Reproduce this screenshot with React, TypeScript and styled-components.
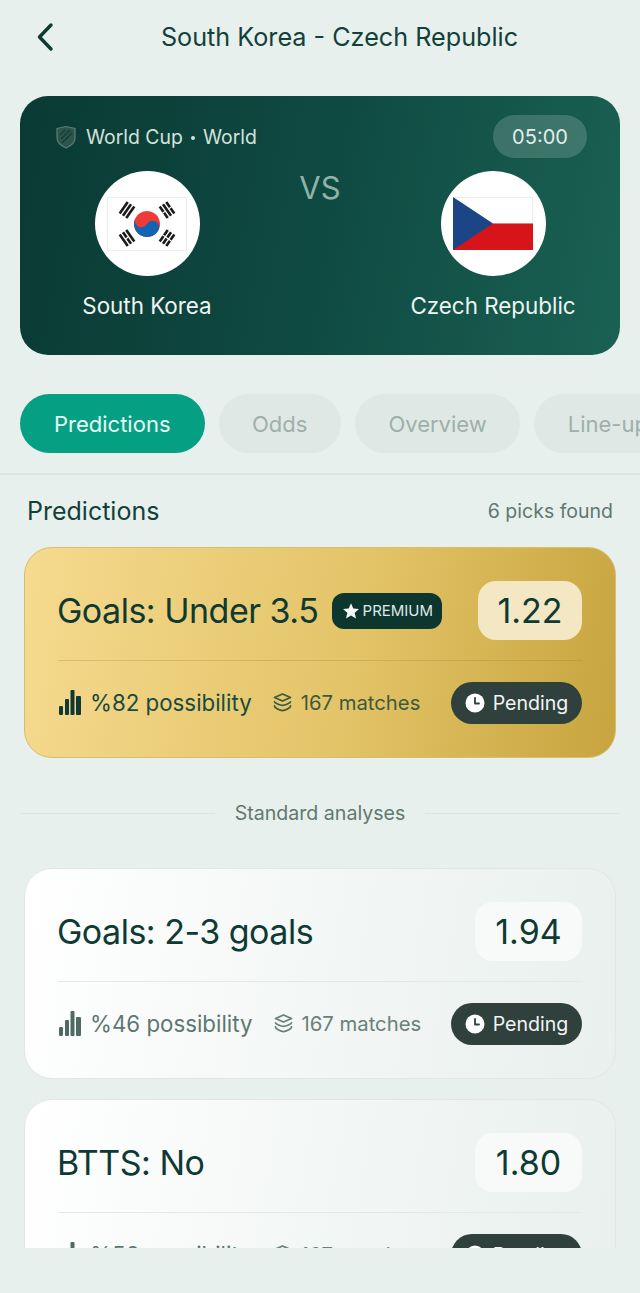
import React from 'react';
import styled, { createGlobalStyle } from 'styled-components';

const GlobalStyle = createGlobalStyle`
  html, body {
    margin: 0;
    padding: 0;
    background: #e8f0ed;
  }
  body {
    font-family: Inter, "Noto Sans", sans-serif;
    color: #0f3a33;
  }
  * {
    box-sizing: border-box;
  }
`;

const Page = styled.div`
  width: 640px;
  height: 1293px;
  display: flex;
  flex-direction: column;
  overflow: hidden;
  background: #e8f0ed;
`;

const Header = styled.header`
  height: 74px;
  flex: none;
  padding: 0 0 1px 39px;
  display: flex;
  align-items: center;
  justify-content: center;
  position: relative;
`;

const BackButton = styled.div`
  position: absolute;
  left: 30px;
  top: 19px;
  width: 32px;
  height: 36px;
  color: #0f3a33;
`;

const HeaderTitle = styled.h1`
  margin: 0;
  font-size: 25.2px;
  font-weight: 400;
  color: #12413a;
`;

const Hero = styled.section`
  flex: none;
  margin: 22px 20px 0;
  height: 259px;
  padding: 19px 33px;
  border-radius: 28px;
  background: linear-gradient(100deg, #0a3a34 0%, #0f4a42 50%, #1a6153 100%);
  color: #fff;
`;

const HeroTop = styled.div`
  height: 43px;
  display: flex;
  align-items: center;
  justify-content: space-between;
`;

const League = styled.div`
  margin-left: 2px;
  display: flex;
  align-items: center;
  gap: 9px;
  font-size: 19.4px;
  color: #d3e2dd;
`;

const Dot = styled.span`
  margin: 0 8px;
  display: inline-block;
  width: 4px;
  height: 4px;
  border-radius: 50%;
  vertical-align: middle;
  background: #d3e2dd;
`;

const TimePill = styled.div`
  width: 94px;
  height: 43px;
  border-radius: 22px;
  display: flex;
  align-items: center;
  justify-content: center;
  background: rgba(255, 255, 255, 0.17);
  font-size: 20px;
  color: #e3eeea;
`;

const Teams = styled.div`
  margin-top: 13px;
  display: flex;
  justify-content: space-between;
`;

const Team = styled.div`
  width: 188px;
  display: flex;
  flex-direction: column;
  align-items: center;
`;

const Crest = styled.div`
  width: 105px;
  height: 105px;
  border-radius: 50%;
  background: #fff;
  display: flex;
  align-items: center;
  justify-content: center;
`;

const TeamName = styled.div`
  margin-top: 16px;
  font-size: 22.4px;
  line-height: 28px;
  white-space: nowrap;
  color: #eef5f2;
`;

const Versus = styled.div`
  margin-top: -1px;
  font-size: 31px;
  line-height: 36px;
  color: #8fb3a9;
`;

const Tabs = styled.nav`
  flex: none;
  margin-top: 39px;
  height: 81px;
  padding-left: 20px;
  display: flex;
  gap: 14px;
  overflow: hidden;
  border-bottom: 2px solid #dde5e2;
`;

const Tab = styled.div<{ $active?: boolean }>`
  flex: none;
  height: 59px;
  padding: 0 ${(p) => (p.$active ? '34px' : '33.5px')};
  border-radius: 30px;
  display: flex;
  align-items: center;
  font-size: 22px;
  background: ${(p) => (p.$active ? '#05a084' : '#e0e8e5')};
  color: ${(p) => (p.$active ? '#e9f8f4' : '#9db0aa')};
`;

const Content = styled.main`
  flex: 1;
  min-height: 0;
  margin-bottom: 45px;
  overflow: hidden;
`;

const SectionHead = styled.div`
  height: 72px;
  padding: 0 27px 0 27px;
  display: flex;
  align-items: center;
  justify-content: space-between;
`;

const SectionTitle = styled.h2`
  margin: 0;
  font-size: 25px;
  font-weight: 400;
  color: #12413a;
`;

const PicksFound = styled.span`
  font-size: 19.5px;
  color: #5f7770;
`;

const Card = styled.article<{ $premium?: boolean }>`
  margin: 0 24px;
  height: 211px;
  padding: 33px 33px 0;
  border-radius: 28px;
  border: 1px solid ${(p) => (p.$premium ? '#d7bd6d' : '#e0e8e5')};
  background: ${(p) =>
    p.$premium
      ? 'linear-gradient(100deg, #f6da8f 0%, #e3c468 55%, #c7a43e 100%)'
      : 'linear-gradient(100deg, #ffffff 0%, #f3f7f6 50%, #e9f0ee 100%)'};

  & + & {
    margin-top: 20px;
  }
`;

const PickRow = styled.div`
  height: 59px;
  display: flex;
  align-items: center;
`;

const PickName = styled.div`
  margin-left: -1px;
  font-size: 34px;
  letter-spacing: -0.5px;
  color: #0f3a33;
  white-space: nowrap;
`;

const PremiumBadge = styled.div`
  margin-left: 14px;
  width: 110px;
  height: 36px;
  border-radius: 12px;
  background: #0d362f;
  color: #dfeae6;
  display: flex;
  align-items: center;
  justify-content: center;
  gap: 3px;
  font-size: 15px;
  white-space: nowrap;
`;

const Odds = styled.div<{ $premium?: boolean }>`
  margin-left: auto;
  width: ${(p) => (p.$premium ? '104px' : '107px')};
  height: 59px;
  border-radius: 18px;
  display: flex;
  align-items: center;
  justify-content: center;
  font-size: 34px;
  color: #0f3a33;
  background: ${(p) => (p.$premium ? '#f3e7c4' : '#f8fafa')};
`;

const Rule = styled.div<{ $premium?: boolean }>`
  margin-top: 20px;
  height: 1px;
  background: ${(p) => (p.$premium ? 'rgba(160, 130, 50, 0.3)' : '#e2e9e6')};
`;

const MetaRow = styled.div`
  margin-top: 21px;
  height: 42px;
  display: flex;
  align-items: center;
`;

const Possibility = styled.div<{ $premium?: boolean }>`
  padding-bottom: 2px;
  display: flex;
  align-items: center;
  gap: 7px;
  font-size: 22.3px;
  white-space: nowrap;
  color: ${(p) => (p.$premium ? '#1a4a3d' : '#5e7670')};

  svg {
    color: ${(p) => (p.$premium ? '#0f3a33' : '#4f6a63')};
  }
`;

const Matches = styled.div<{ $premium?: boolean }>`
  margin-left: 20px;
  padding-bottom: 2px;
  display: flex;
  align-items: center;
  gap: 8px;
  font-size: 20.3px;
  white-space: nowrap;
  color: ${(p) => (p.$premium ? '#3d5a3c' : '#6a807a')};
`;

const StatusPill = styled.div`
  margin-left: auto;
  width: 131px;
  height: 42px;
  border-radius: 21px;
  background: #2f403d;
  color: #f1f5f4;
  display: flex;
  align-items: center;
  justify-content: center;
  gap: 8px;
  font-size: 19.6px;
`;

const Separator = styled.div`
  margin: 0 20px;
  height: 110px;
  display: flex;
  align-items: center;
  gap: 20px;
  font-size: 19.6px;
  color: #62786f;

  &::before,
  &::after {
    content: '';
    flex: 1;
    height: 1px;
    background: #dbe4e1;
  }
`;

const ChevronIcon = () => (
  <svg width="32" height="36" viewBox="0 0 32 36" fill="none">
    <path d="M21 6 L9.5 18 L21 30" stroke="currentColor" strokeWidth="3.4" strokeLinecap="round" strokeLinejoin="round" />
  </svg>
);

const ShieldIcon = () => (
  <svg width="22" height="24" viewBox="0 0 22 24" fill="none">
    <path d="M2 3.5 L11 1.5 L20 3.5 V13 C20 18 15.5 21 11 23 C6.5 21 2 18 2 13 Z" fill="#2f544c" stroke="#5b7d75" strokeWidth="1.2" />
    <path d="M6 14 L15 5 M7 18 L17 8 M5 10 L10 5" stroke="#123f38" strokeWidth="1.6" />
  </svg>
);

const Trigram = ({ x, y, angle, breaks }: { x: number; y: number; angle: number; breaks: number[] }) => (
  <g transform={`translate(${x} ${y}) rotate(${angle})`}>
    {[-4, 0, 4].map((o, i) => (
      <React.Fragment key={o}>
        <rect x="-7" y={o - 1.3} width="14" height="2.6" fill="#1b1b1b" />
        {breaks[i] ? <rect x="-0.6" y={o - 1.6} width="1.2" height="3.2" fill="#fff" /> : null}
      </React.Fragment>
    ))}
  </g>
);

const KoreaFlag = () => (
  <svg width="80" height="54" viewBox="-40 -27 80 54">
    <rect x="-39.5" y="-26.5" width="79" height="53" fill="#fff" stroke="#ececec" strokeWidth="1" />
    <g transform="rotate(30)">
      <circle r="13" fill="#ef3b36" />
      <path d="M-13 0 A6.5 6.5 0 0 0 0 0 A6.5 6.5 0 0 1 13 0 A13 13 0 0 1 -13 0 Z" fill="#0f64b4" />
    </g>
    <Trigram x={-20} y={-14} angle={-55} breaks={[0, 0, 0]} />
    <Trigram x={20} y={-14} angle={55} breaks={[1, 0, 1]} />
    <Trigram x={-20} y={14} angle={55} breaks={[0, 1, 0]} />
    <Trigram x={20} y={14} angle={-55} breaks={[1, 1, 1]} />
  </svg>
);

const CzechFlag = () => (
  <svg width="80" height="53" viewBox="0 0 80 53">
    <rect x="0.5" y="0.5" width="79" height="26" fill="#fff" stroke="#ececec" strokeWidth="1" />
    <rect y="26.5" width="80" height="26.5" fill="#d7141a" />
    <path d="M0 0 L40 26.5 L0 53 Z" fill="#1c4587" />
  </svg>
);

const BarsIcon = () => (
  <svg width="25" height="26" viewBox="0 0 25 26" fill="currentColor">
    <rect x="1" y="17" width="4" height="9" rx="1.2" />
    <rect x="7" y="10" width="4" height="16" rx="1" />
    <rect x="12.5" y="1" width="4" height="25" rx="1" />
    <rect x="18" y="7" width="5" height="19" rx="1" />
  </svg>
);

const LayersIcon = () => (
  <svg width="21" height="21" viewBox="0 0 21 21" fill="none" stroke="currentColor" strokeWidth="1.8" strokeLinejoin="round" strokeLinecap="round">
    <path d="M10.5 2 L18.5 5.5 L10.5 9 L2.5 5.5 Z" />
    <path d="M2.5 9.8 C2.5 11 8 13.4 10.5 13.4 C13 13.4 18.5 11 18.5 9.8" />
    <path d="M2.5 14 C2.5 16 8 18.6 10.5 18.6 C13 18.6 18.5 16 18.5 14" />
  </svg>
);

const StarIcon = () => (
  <svg width="18" height="18" viewBox="0 0 18 18" fill="#f4f7f6">
    <path d="M9 1.2 L11.3 6.4 L17 7 L12.7 10.8 L14 16.4 L9 13.5 L4 16.4 L5.3 10.8 L1 7 L6.7 6.4 Z" />
  </svg>
);

const ClockIcon = () => (
  <svg width="20" height="20" viewBox="0 0 20 20" fill="none">
    <circle cx="10" cy="10" r="9.5" fill="#fff" />
    <path d="M10 5 V10.5 H14" stroke="#2f403d" strokeWidth="1.8" strokeLinecap="round" strokeLinejoin="round" />
  </svg>
);

type Pick = {
  name: string;
  odds: string;
  chance: number;
  premium?: boolean;
};

const standardPicks: Pick[] = [
  { name: 'Goals: 2-3 goals', odds: '1.94', chance: 46 },
  { name: 'BTTS: No', odds: '1.80', chance: 56 },
];

const PickCard = ({ pick }: { pick: Pick }) => (
  <Card $premium={pick.premium}>
    <PickRow>
      <PickName>{pick.name}</PickName>
      {pick.premium && (
        <PremiumBadge>
          <StarIcon />
          PREMIUM
        </PremiumBadge>
      )}
      <Odds $premium={pick.premium}>{pick.odds}</Odds>
    </PickRow>
    <Rule $premium={pick.premium} />
    <MetaRow>
      <Possibility $premium={pick.premium}>
        <BarsIcon />%{pick.chance} possibility
      </Possibility>
      <Matches $premium={pick.premium}>
        <LayersIcon />
        167 matches
      </Matches>
      <StatusPill>
        <ClockIcon />
        Pending
      </StatusPill>
    </MetaRow>
  </Card>
);

export default function App() {
  return (
    <Page>
      <GlobalStyle />
      <Header>
        <BackButton>
          <ChevronIcon />
        </BackButton>
        <HeaderTitle>South Korea - Czech Republic</HeaderTitle>
      </Header>

      <Hero>
        <HeroTop>
          <League>
            <ShieldIcon />
            <span>
              World Cup<Dot />World
            </span>
          </League>
          <TimePill>05:00</TimePill>
        </HeroTop>
        <Teams>
          <Team>
            <Crest>
              <KoreaFlag />
            </Crest>
            <TeamName>South Korea</TeamName>
          </Team>
          <Versus>VS</Versus>
          <Team>
            <Crest>
              <CzechFlag />
            </Crest>
            <TeamName>Czech Republic</TeamName>
          </Team>
        </Teams>
      </Hero>

      <Tabs>
        <Tab $active>Predictions</Tab>
        <Tab>Odds</Tab>
        <Tab>Overview</Tab>
        <Tab>Line-up</Tab>
      </Tabs>

      <Content>
        <SectionHead>
          <SectionTitle>Predictions</SectionTitle>
          <PicksFound>6 picks found</PicksFound>
        </SectionHead>
        <PickCard pick={{ name: 'Goals: Under 3.5', odds: '1.22', chance: 82, premium: true }} />
        <Separator>Standard analyses</Separator>
        {standardPicks.map((pick) => (
          <PickCard key={pick.name} pick={pick} />
        ))}
      </Content>
    </Page>
  );
}
